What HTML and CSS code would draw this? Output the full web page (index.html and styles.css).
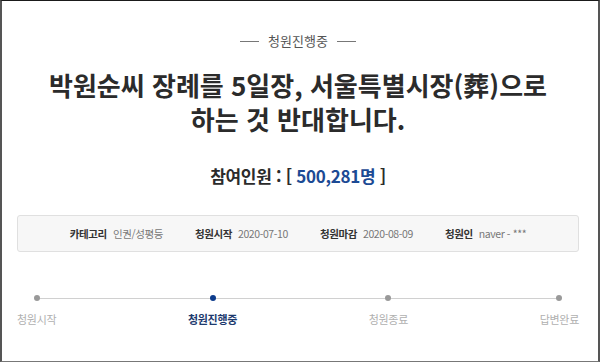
FILE: index.html
```html
<!DOCTYPE html>
<html lang="ko">
<head>
  <meta charset="UTF-8" />
  <meta name="viewport" content="width=device-width, initial-scale=1.0"/>
  <title>청원진행중</title>
  <link rel="stylesheet" href="styles.css">
</head>
<body>

<div class="page">

  <!-- Status -->
  <div class="status">
    <span class="dash"></span>
    <span>청원진행중</span>
    <span class="dash"></span>
  </div>

  <!-- Title -->
  <h1 class="title">박원순씨 장례를 5일장, 서울특별시장(葬)으로<br>하는 것 반대합니다.</h1>

  <!-- Count -->
  <div class="count">참여인원 : [ <span class="num">500,281명</span> ]</div>

  <!-- Info -->
  <div class="info">
    <div class="item"><b>카테고리</b><span>인권/성평등</span></div>
    <div class="item"><b>청원시작</b><span>2020-07-10</span></div>
    <div class="item"><b>청원마감</b><span>2020-08-09</span></div>
    <div class="item"><b>청원인</b><span>naver - ***</span></div>
  </div>

  <!-- Steps -->
  <div class="steps">
    <div class="step"><i class="dot"></i><span>청원시작</span></div>
    <div class="step active"><i class="dot"></i><span>청원진행중</span></div>
    <div class="step"><i class="dot"></i><span>청원종료</span></div>
    <div class="step"><i class="dot"></i><span>답변완료</span></div>
  </div>

</div>

</body>
</html>
```

FILE: styles.css
```css
body {
  margin: 0;
  padding: 0;
  font-family: "Noto Sans CJK KR", "Noto Sans", sans-serif;
  color: #333;
  background: #fff;
}

.page {
  box-sizing: border-box;
  width: 600px;
  height: 362px;
  padding: 30px 19px 0 15px;
  border-top: 1px solid #1a1a1a;
  border-left: 2px solid #555;
  border-right: 2px solid #555;
  border-bottom: 1px solid #777;
  overflow: hidden;
}

.status {
  display: flex;
  justify-content: center;
  align-items: center;
  gap: 9px;
  font-size: 13px;
  line-height: 20px;
  color: #555;
}

.status .dash {
  width: 19px;
  height: 1px;
  background: #777;
}

.title {
  margin: 17px 0 0;
  font-size: 26px;
  line-height: 34px;
  font-weight: bold;
  text-align: center;
  color: #2b2b2b;
}

.count {
  margin-top: 28px;
  font-size: 17px;
  line-height: 24px;
  font-weight: bold;
  text-align: center;
  letter-spacing: -0.3px;
  color: #2b2b2b;
}

.count .num {
  color: #1c4a94;
}

.info {
  box-sizing: border-box;
  height: 37px;
  margin-top: 27px;
  display: flex;
  justify-content: center;
  align-items: center;
  gap: 32px;
  background: #f7f7f7;
  border: 1px solid #e0e0e0;
  border-radius: 3px;
  font-size: 10.5px;
  letter-spacing: -0.4px;
}

.info .item {
  display: flex;
  gap: 6px;
}

.info b {
  color: #333;
}

.info span {
  color: #777;
}

/* Steps */
.steps {
  position: relative;
  margin-top: 43px;
  display: flex;
  justify-content: space-between;
}

.steps::before {
  content: "";
  position: absolute;
  left: 18px;
  right: 18px;
  top: 3px;
  height: 1px;
  background: #d0d0d0;
}

.step {
  display: flex;
  flex-direction: column;
  align-items: center;
  gap: 10px;
  font-size: 11px;
  line-height: 16px;
  letter-spacing: -0.3px;
  color: #b0b0b0;
}

.dot {
  position: relative;
  width: 6px;
  height: 6px;
  border-radius: 50%;
  background: #999;
}

.step.active {
  color: #1d3a6e;
  font-weight: bold;
}

.step.active .dot {
  background: #0d3c8c;
}
```
